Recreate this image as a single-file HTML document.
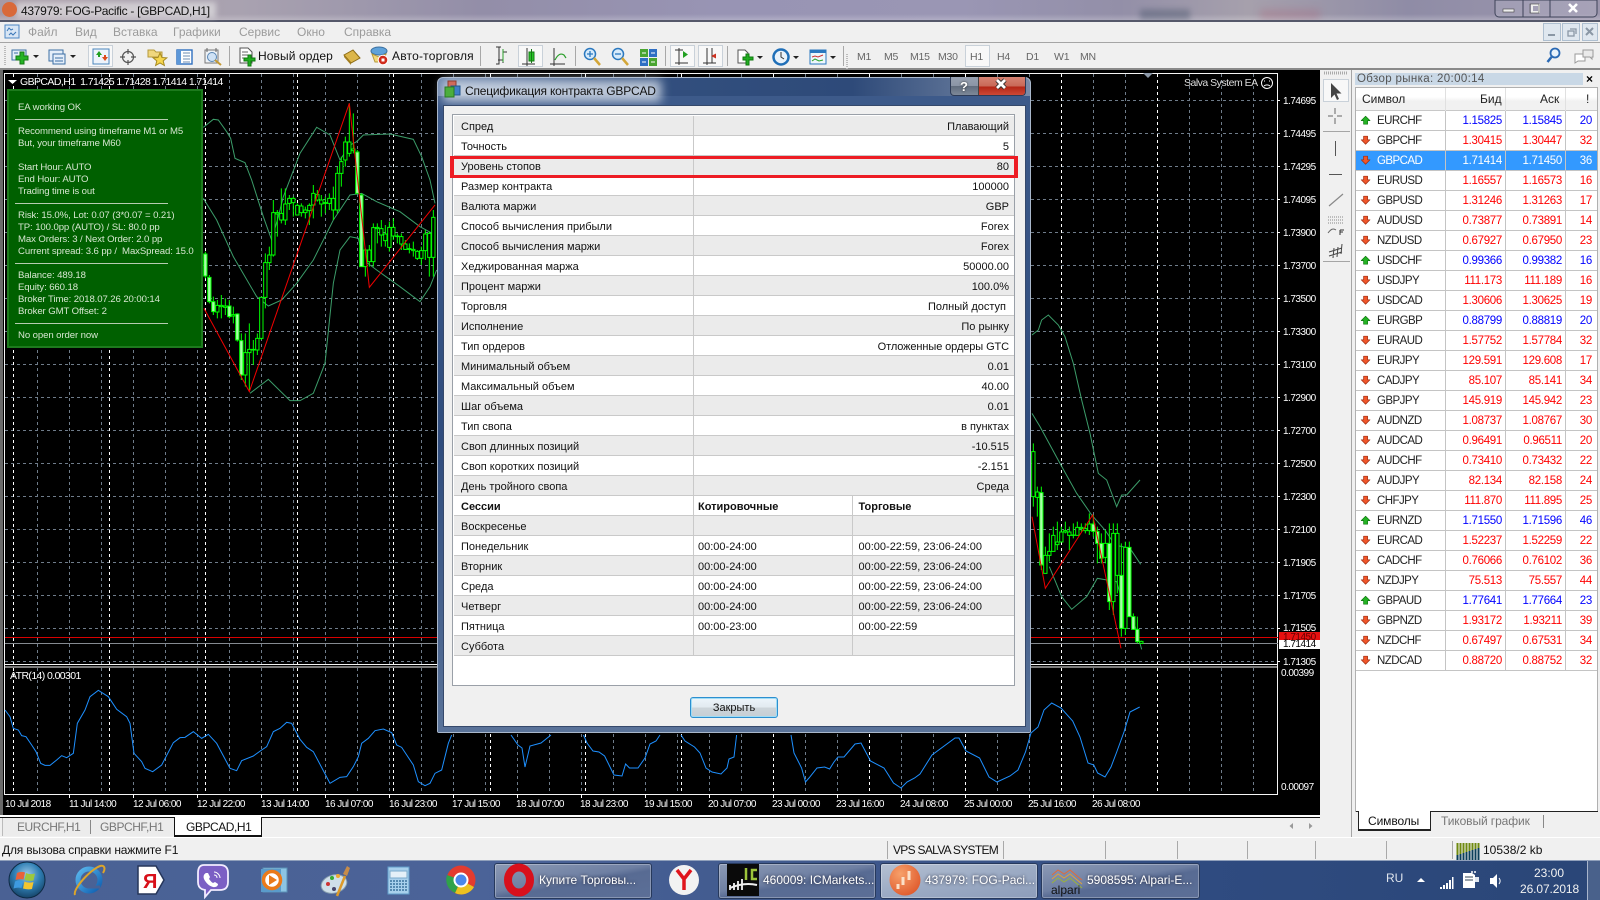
<!DOCTYPE html>
<html lang="ru"><head><meta charset="utf-8"><title>437979: FOG-Pacific - [GBPCAD,H1]</title>
<style>
*{box-sizing:border-box}
html,body{margin:0;padding:0;width:1600px;height:900px;overflow:hidden;background:#f0f0f0;font-family:"Liberation Sans",sans-serif;font-size:11px;color:#111}
.a{position:absolute;white-space:pre;line-height:14px}
.box{position:absolute}
svg{position:absolute;left:0;top:0}
.menu{color:#9b9b9b;font-size:12px;top:25px}
.tf{color:#666;font-size:10.5px;top:50px;letter-spacing:-.2px}
.px{color:#fff;font-size:10px;left:1283px;letter-spacing:-.5px;line-height:12px;margin-top:1px}
.tm{color:#fff;font-size:10px;top:799px;letter-spacing:-.55px;line-height:12px}
.gp{color:#d6e6d0;font-size:9.6px;left:18px;letter-spacing:-.1px;line-height:12px;margin-top:1px}
.hr{position:absolute;left:15px;width:153px;height:1px;background:#b5ccb0}
.row{position:absolute;left:454px;width:560px;height:20px;border-bottom:1px solid #c9c9c9;line-height:18px}
.row.g{background:#ebebeb}.row.w{background:#fff}
.row i{position:absolute;top:0;height:19px;width:1px;background:#c9c9c9}
.row b,.row span{position:absolute;top:2px;font-weight:400;white-space:pre}
.row .l{left:7px}.row .v{right:5px}.row .c2{left:244px}.row .c3{left:404.5px}
.mw{position:absolute;left:1356px;width:241px;height:20px;border-bottom:1px solid #c4c4c4;line-height:21px;font-size:11.5px;letter-spacing:-.3px;color:#f00;background:#fff}
.mw.u{color:#00f}.mw.s{background:#3399ff;color:#fff}
.mw u{position:absolute;text-decoration:none;top:0;white-space:pre}
.mw .n{left:21px;color:#222;letter-spacing:-.55px}.mw.s .n{color:#fff}
.mw .b{right:95px}.mw .k{right:35px}.mw .x{right:5px}
.mw i{position:absolute;top:0;width:1px;height:20px;background:#c4c4c4}
.mw svg{left:4px;top:4px}
.tb{position:absolute;top:863px;height:36px;border:1px solid #27395c;border-radius:3px;background:linear-gradient(170deg,#8c9ab5 0%,#6f80a3 45%,#586b93 55%,#5c6f97 100%);box-shadow:inset 0 0 0 1px rgba(255,255,255,.28)}
.tbt{position:absolute;color:#fff;font-size:12px;top:873px;white-space:pre;text-shadow:0 0 3px #223}
.sep{position:absolute;width:1px;background:#a9a9a9}
.tool{position:absolute;top:45px;height:22px;border:1px solid #c9d1d9;background:#f8f8f8}
</style></head><body>

<!-- wallpaper title -->
<div class="box" style="left:0;top:0;width:1600px;height:21px;background:linear-gradient(90deg,#a79aa6 0,#a9a2b0 15%,#938ea8 30%,#9894b4 45%,#9a96b4 60%,#938fa8 70%,#a6a0ac 78%,#8f8ca6 88%,#9c96ad 100%)"></div>
<div class="box" style="left:0;top:14px;width:1600px;height:6px;background:linear-gradient(180deg,rgba(255,255,255,0),rgba(255,255,255,.22))"></div>
<div class="box" style="left:1140px;top:9px;width:50px;height:11px;background:#3a4a60;opacity:.35;filter:blur(3px)"></div>
<div class="box" style="left:1260px;top:9px;width:60px;height:11px;background:#b05a70;opacity:.25;filter:blur(4px)"></div>
<div class="box" style="left:0;top:20px;width:1600px;height:2px;background:#55586a"></div>
<div class="box" style="left:16px;top:2px;width:200px;height:16px;background:rgba(235,235,235,.6);filter:blur(3px)"></div>
<div class="box" style="left:2px;top:2px;width:15px;height:15px;border-radius:8px;background:#d9693a"></div>
<div class="a" style="left:21px;top:4px;font-size:12px;color:#111;letter-spacing:-.3px">437979: FOG-Pacific - [GBPCAD,H1]</div>

<!-- menu -->
<div class="box" style="left:0;top:22px;width:1600px;height:20px;background:#f0f0f0"></div>
<div class="box" style="left:0;top:42px;width:1600px;height:1px;background:#a5a5a5"></div>
<div class="box" style="left:0;top:68px;width:1600px;height:2px;background:#8a8a8a"></div>
<div class="a menu" style="left:28px">Файл</div><div class="a menu" style="left:75px">Вид</div><div class="a menu" style="left:113px">Вставка</div><div class="a menu" style="left:173px">Графики</div><div class="a menu" style="left:239px">Сервис</div><div class="a menu" style="left:297px">Окно</div><div class="a menu" style="left:344px">Справка</div>

<!-- active toolbar boxes -->
<div class="tool" style="left:88px;width:25px"></div>
<div class="tool" style="left:518px;width:25px"></div>
<div class="tool" style="left:670px;width:25px"></div>
<div class="tool" style="left:698px;width:25px"></div>
<div class="tool" style="left:965px;width:25px"></div>
<div class="a" style="left:258px;top:49px;font-size:12px;letter-spacing:.1px">Новый ордер</div>
<div class="a" style="left:392px;top:49px;font-size:12px;letter-spacing:.2px">Авто-торговля</div>
<div class="a tf" style="left:857px">M1</div><div class="a tf" style="left:884px">M5</div><div class="a tf" style="left:910px">M15</div><div class="a tf" style="left:938px">M30</div><div class="a tf" style="left:970px">H1</div><div class="a tf" style="left:997px">H4</div><div class="a tf" style="left:1026px">D1</div><div class="a tf" style="left:1054px">W1</div><div class="a tf" style="left:1080px">MN</div>

<!-- toolbar icons -->
<svg width="1600" height="70" style="z-index:2">
<g fill="none" stroke="#a8a8a8"><path d="M229.5 46v20M480.5 46v20M575.5 46v20M665.5 46v20M727.5 46v20M843.5 46v20"/></g>
<path d="M5 46v20M847 54v20" stroke="#bbb" stroke-dasharray="1 1" stroke-width="2" fill="none"/>
<!-- app menu icon -->
<rect x="5" y="25" width="14" height="13" fill="#d8e6f5" stroke="#4d86c4"/><path d="M7 31l2-3 2 2 2-1M9 35l2-2 2 2 3-3" stroke="#3a77b8" fill="none"/>
<!-- new chart -->
<rect x="12" y="50" width="14" height="10" fill="#e4eef9" stroke="#3d6fa5"/><path d="M14 53h4M20 56h4" stroke="#3d6fa5"/><path d="M20 52h4v4h4v4h-4v4h-4v-4h-4v-4h4z" fill="#25b325" stroke="#137a13"/><path d="M33 55h6l-3 3z" fill="#222"/>
<rect x="49" y="50" width="14" height="11" fill="#e4eef9" stroke="#3d6fa5"/><rect x="53" y="54" width="12" height="10" fill="#e4eef9" stroke="#3d6fa5"/><path d="M55 58h8M55 61h8" stroke="#3d6fa5"/><path d="M70 55h6l-3 3z" fill="#222"/>
<!-- market watch -->
<rect x="93" y="49" width="16" height="15" fill="#eef4fb" stroke="#4b86bd"/><path d="M96 55l3-4 3 4h-2v2h-2v-2z" fill="#21a021"/><path d="M102 57l3 4 3-4h-2v-2h-2v2z" fill="#dd4b1c"/>
<!-- crosshair -->
<circle cx="128" cy="57" r="5.5" fill="none" stroke="#555" stroke-width="1.2"/><path d="M128 49v5M128 60v5M120 57h5M131 57h5" stroke="#555" stroke-width="1.2"/>
<!-- folder star -->
<path d="M148 50h6l2 2h6v5h-14z" fill="#f0d77e" stroke="#b69a3b"/><path d="M160 53l2 4.500 4.800.400-3.600 3 1.200 4.600-4.400-2.500-4.400 2.500 1.200-4.600-3.600-3 4.800-.400z" fill="#f6d64e" stroke="#a68a20"/>
<!-- navigator -->
<rect x="177" y="50" width="15" height="14" fill="#fff" stroke="#2f6fbf" stroke-width="1.400"/><rect x="177" y="50" width="4" height="14" fill="#5c97d8"/><path d="M183 53h7M183 56h7M183 59h7M183 62h7" stroke="#6c8cb0"/>
<!-- tester -->
<rect x="205" y="50" width="13" height="13" fill="#eef2f6" stroke="#777"/><path d="M207 48v4M216 48v4" stroke="#666"/><circle cx="212" cy="57" r="4.500" fill="#cfe2f5" stroke="#5886b5"/><path d="M215 60l6 5" stroke="#c49a35" stroke-width="2"/>
<!-- new order -->
<path d="M240 48h8l4 4v11h-12z" fill="#fff" stroke="#555"/><path d="M242 52h6M242 55h8M242 58h5" stroke="#666"/><path d="M248 55h3v3h4v3h-4v5h-3v-5h-4v-3h4z" fill="#21ad21" stroke="#0f7a0f"/>
<!-- book -->
<path d="M344 55l9-5 7 8-9 5z" fill="#dcb64a" stroke="#8c6b15"/><path d="M344 55l7 8v2l-7-8z" fill="#a47f20"/>
<!-- auto trading -->
<ellipse cx="379" cy="51" rx="8" ry="4" fill="#5fa2da" stroke="#3a6f9f"/><path d="M372 54l7 3 7-3-3 8h-8z" fill="#f2d87a" stroke="#b69a3b"/><circle cx="383" cy="60" r="4.800" fill="#d02a1a" stroke="#fff"/><rect x="381.500" y="58.500" width="3" height="3" fill="#fff"/>
<!-- bar chart -->
<path d="M498 60h5M503 50v13M503 52h4M499 47v17h-3M496 47h5" stroke="#333" fill="none"/><path d="M503 49v13" stroke="#2a9f2a"/>
<path d="M527 48v18M522 64h13" stroke="#333" fill="none"/><rect x="529" y="52" width="5" height="9" fill="#28c428" stroke="#167a16"/><path d="M531.500 49v14" stroke="#167a16"/>
<path d="M554 48v18M550 64h15" stroke="#333" fill="none"/><path d="M555 60c3-6 6-7 9-5l2 3" stroke="#2a9f2a" fill="none" stroke-width="1.200"/>
<!-- zoom + -->
<circle cx="590" cy="54" r="5.500" fill="#d7ebfb" stroke="#2a78bf" stroke-width="1.500"/><path d="M587 54h6M590 51v6" stroke="#2a78bf" stroke-width="1.300"/><path d="M594 58l6 7" stroke="#d3a638" stroke-width="2.500"/>
<circle cx="618" cy="54" r="5.500" fill="#d7ebfb" stroke="#2a78bf" stroke-width="1.500"/><path d="M615 54h6" stroke="#2a78bf" stroke-width="1.300"/><path d="M622 58l6 7" stroke="#d3a638" stroke-width="2.500"/>
<!-- tile -->
<rect x="640" y="49" width="8" height="8" fill="#4aa531"/><rect x="649" y="49" width="8" height="8" fill="#2f6fc4"/><rect x="640" y="58" width="8" height="8" fill="#2f6fc4"/><rect x="649" y="58" width="8" height="8" fill="#4aa531"/><path d="M642 53h4M651 53h4M642 62h4M651 62h4" stroke="#fff"/>
<!-- autoscroll -->
<path d="M679 48v17M675 63h13M675 50h8" stroke="#333" fill="none"/><path d="M683 58v-7l5 3.500z" fill="#22a022"/>
<path d="M707 48v17M703 63h13" stroke="#333" fill="none"/><path d="M712 48v15" stroke="#333"/><path d="M711 56l5-2.500v5z" fill="#cc3322"/>
<!-- add indicator -->
<path d="M738 50h7l3 3v10h-10z" fill="#fff" stroke="#555"/><path d="M743 57h3v-3h3v3h4v3h-4v5h-3v-5h-3z" fill="#21ad21" stroke="#0f7a0f"/>
<path d="M757 56h6l-3 3z" fill="#222"/>
<!-- clock -->
<circle cx="781" cy="57" r="7.500" fill="#e9f2fa" stroke="#1f6fb8" stroke-width="2.500"/><path d="M781 52v5l3 2" stroke="#333" fill="none"/><path d="M793 56h6l-3 3z" fill="#222"/>
<!-- template -->
<rect x="810" y="50" width="16" height="14" fill="#eef6fb" stroke="#2a78bf"/><rect x="810" y="50" width="16" height="3" fill="#2a78bf"/><path d="M812 57l3-1 3 1 5-2" stroke="#c33" fill="none"/><path d="M812 61l3-2 4 2 4-1" stroke="#29a329" fill="none"/><path d="M830 56h6l-3 3z" fill="#222"/>
<!-- search + chat -->
<circle cx="1555" cy="53" r="4.500" fill="#e8f2fb" stroke="#2a69b4" stroke-width="1.800"/><path d="M1551.500 57l-4 5" stroke="#2a69b4" stroke-width="2.500"/>
<path d="M1575 54h10v7h-7l-3 2v-2z" fill="#fff" stroke="#9a9a9a"/><path d="M1583 50h10v7h-1v2l-2-2h-7z" fill="#eaeaea" stroke="#9a9a9a"/>
<!-- window ctrl -->
<path d="M1495 0v13a4 4 0 0 0 4 4h94a4 4 0 0 0 4-4V0z" fill="rgba(200,200,215,.25)" stroke="#3d4258"/><path d="M1523 0v17M1550 0v17" stroke="#3d4258"/>
<rect x="1503" y="9" width="11" height="3" fill="#eee" stroke="#444" stroke-width=".6"/><rect x="1532" y="5" width="7" height="7" fill="none" stroke="#eee" stroke-width="2"/><rect x="1530" y="4" width="9" height="9" fill="none" stroke="#444" stroke-width=".6"/>
<path d="M1569 4l8 8M1577 4l-8 8" stroke="#fff" stroke-width="2.600"/>
<!-- mdi -->
<rect x="1543.500" y="23.500" width="17" height="17" fill="#dfe7ef" stroke="#aebfd0"/><rect x="1562.500" y="23.500" width="17" height="17" fill="#dfe7ef" stroke="#aebfd0"/><rect x="1582.500" y="23.500" width="15" height="17" fill="#dfe7ef" stroke="#aebfd0"/>
<path d="M1548 35h7" stroke="#8a97a5" stroke-width="2"/><rect x="1568" y="31" width="6" height="5" fill="none" stroke="#8a97a5" stroke-width="1.300"/><path d="M1570 29h6v5" fill="none" stroke="#8a97a5" stroke-width="1.300"/><path d="M1586 28l7 7M1593 28l-7 7" stroke="#8a97a5" stroke-width="2"/>
</svg>

<!-- CHART -->
<svg width="1600" height="900" style="z-index:1">
<rect x="0" y="70" width="3" height="747" fill="#6a6a6a"/>
<rect x="3" y="70" width="1317" height="745" fill="#000"/>
<g fill="none">
<path stroke="#6f7c8a" stroke-dasharray="3 3" d="M37.500 74V794M69.500 74V794M101.500 74V794M133.500 74V794M165.500 74V794M197.500 74V794M229.500 74V794M261.500 74V794M293.500 74V794M325.500 74V794M357.500 74V794M389.500 74V794M421.500 74V794M453.500 74V794M485.500 74V794M517.500 74V794M549.500 74V794M581.500 74V794M613.500 74V794M645.500 74V794M677.500 74V794M709.500 74V794M741.500 74V794M773.500 74V794M805.500 74V794M837.500 74V794M869.500 74V794M901.500 74V794M933.500 74V794M965.500 74V794M997.500 74V794M1029.500 74V794M1061.500 74V794M1093.500 74V794M1125.500 74V794M1157.500 74V794M1189.500 74V794M1221.500 74V794M1253.500 74V794"/>
<path stroke="#6f7c8a" stroke-dasharray="3 3" d="M5 100.500H1277M5 133.500H1277M5 166.500H1277M5 199.500H1277M5 232.500H1277M5 265.500H1277M5 298.500H1277M5 331.500H1277M5 364.500H1277M5 397.500H1277M5 430.500H1277M5 463.500H1277M5 496.500H1277M5 529.500H1277M5 562.500H1277M5 595.500H1277M5 628.500H1277M5 661.500H1277"/>
<path stroke="#fff" stroke-dasharray="3 3" d="M13.500 74V794M109.500 74V794M205.500 74V794M297.500 74V794M393.500 74V794M490.500 74V794M585.500 74V794M681.500 74V794M773.500 74V794M869.500 74V794M965.500 74V794M1061.500 74V794M1157.500 74V794"/>
</g>
<!-- frame -->
<path d="M4.500 73.500H1277.500V794.500H4.500Z M4.500 664.500H1277.500 M4.500 667H1277.500" fill="none" stroke="#f4f4f4"/>
<path d="M69.500 794v4M133.500 794v4M197.500 794v4M261.500 794v4M325.500 794v4M389.500 794v4M453.500 794v4M517.500 794v4M581.500 794v4M645.500 794v4M709.500 794v4M773.500 794v4M837.500 794v4M901.500 794v4M965.500 794v4M1029.500 794v4M1093.500 794v4" stroke="#fff" fill="none"/>
<path d="M1277 100.500h3M1277 133.500h3M1277 166.500h3M1277 199.500h3M1277 232.500h3M1277 265.500h3M1277 298.500h3M1277 331.500h3M1277 364.500h3M1277 397.500h3M1277 430.500h3M1277 463.500h3M1277 496.500h3M1277 529.500h3M1277 562.500h3M1277 595.500h3M1277 628.500h3M1277 661.500h3" stroke="#fff"/>
<path d="M1143 73h10l-5 5z" fill="#8c98a8"/>
<!-- ask/bid lines -->
<path d="M5 637.500H1278" stroke="#d80000"/>
<path d="M5 643.500H1278" stroke="#858a90"/>
<rect x="1279" y="632" width="41" height="8" fill="#e81010"/>
<rect x="1279" y="640" width="41" height="9" fill="#fff"/>

<!-- left cluster -->
<g transform="translate(0,70) scale(.33333)" fill="none">
<g stroke="#3c9d6a" stroke-width="3">
<path d="M610 172L640 148 655 150 680 185 692 205 705 265 735 278 755 330 790 440 815 510 835 440 850 380 900 250 950 172 990 195 1020 270 1050 225 1070 215 1090 195 1170 192 1240 208 1265 260 1290 330 1305 400"/>
<path d="M610 385L650 450 700 560 770 680 805 708 845 690 890 640 940 570 1000 450 1050 375 1085 370 1130 395 1200 425 1260 470 1300 492"/>
<path d="M750 970L805 928 870 992 900 992 940 970 975 880 1000 640 1020 540 1050 500 1075 505 1090 570 1130 600 1200 650 1260 695 1290 650 1310 600"/>
</g>
<path stroke="#00ff00" stroke-width="3" d="M616 545V625M628 615V700M640 680V735M652 690V745M664 675V745M676 685V735M688 690V745M700 710V760M712 730V815M724 790V930M736 790V950M748 760V960M760 810V885M772 790V855M784 680V810M796 550V715M808 530V600M820 390V560M832 420V500M844 355V460M856 355V465M868 375V420M880 380V440M892 400V435M904 400V440M916 410V445M928 400V465M940 345V445M952 360V395M964 375V440M976 380V430M988 370V420M1000 350V450M1012 290V430M1024 260V350M1036 200V290M1048 100V260M1060 130V250M1072 240V340M1084 370V590M1096 535V620M1108 525V590M1120 460V590M1132 460V520M1144 450V530M1156 465V530M1168 455V545M1180 445V510M1192 490V520M1204 490V540M1216 510V540M1228 520V550M1240 515V560M1252 540V570M1264 530V585M1276 480V570M1288 485V620M1300 420V620"/>
<path stroke="#00ff00" stroke-width="3" fill="#000" d="M647 706h10V726h-10zM659 706h10V710h-10zM671 708h10V712h-10zM695 734h10V738h-10zM731 848h10V915h-10zM743 838h10V848h-10zM755 838h10V840h-10zM767 805h10V840h-10zM779 682h10V805h-10zM791 578h10V682h-10zM803 555h10V578h-10zM815 428h10V555h-10zM827 428h10V432h-10zM839 430h10V450h-10zM851 402h10V450h-10zM863 385h10V400h-10zM875 385h10V398h-10zM887 406h10V435h-10zM899 408h10V428h-10zM911 420h10V428h-10zM923 406h10V422h-10zM935 370h10V405h-10zM947 374h10V390h-10zM959 390h10V402h-10zM971 398h10V400h-10zM983 385h10V400h-10zM995 385h10V420h-10zM1007 310h10V420h-10zM1019 275h10V310h-10zM1031 216h10V270h-10zM1043 216h10V250h-10zM1055 237h10V242h-10zM1091 540h10V590h-10zM1103 540h10V575h-10zM1115 473h10V575h-10zM1127 472h10V476h-10zM1139 476h10V495h-10zM1151 492h10V512h-10zM1163 472h10V532h-10zM1175 472h10V498h-10zM1187 498h10V500h-10zM1199 500h10V522h-10zM1211 522h10V538h-10zM1223 536h10V538h-10zM1235 538h10V542h-10zM1247 544h10V565h-10zM1259 542h10V565h-10zM1271 492h10V542h-10zM1283 490h10V562h-10zM1295 442h10V562h-10z"/>
<path stroke="#00ff00" stroke-width="3" fill="#a8ffa8" d="M611 552h10V618h-10zM623 622h10V695h-10zM635 695h10V725h-10zM683 708h10V740h-10zM707 732h10V810h-10zM719 812h10V915h-10zM1067 246h10V370h-10zM1079 375h10V590h-10z"/>
<path stroke="#f00000" stroke-width="3" d="M612 715L748 965 1048 100 1108 652 1305 405"/>
</g>
<!-- right cluster -->
<g transform="translate(1020,300) scale(.33333)" fill="none">
<g stroke="#3c9d6a" stroke-width="3">
<path d="M36 105L55 90 65 60 85 45 115 75 135 110 160 190 185 300 210 400 235 520 260 540 290 620 305 585 320 585 360 540"/>
<path d="M36 340L60 380 120 490 170 580 215 645 255 690 285 735 330 745 362 793"/>
<path d="M88 800L125 890 155 928 200 890 232 835 290 845 300 880 340 960 365 1048"/>
</g>
<path stroke="#00ff00" stroke-width="3" d="M40 430V620M52 560V650M64 560V810M76 740V820M88 700V785M100 680V755M112 665V750M124 680V725M136 665V700M148 680V750M160 670V715M172 665V705M184 670V695M196 670V700M208 640V705M220 645V710M232 680V790M244 700V790M256 690V790M268 670V930M280 670V945M292 670V880M304 730V1010M316 725V1005M328 725V950M340 940V990M352 950V1030M364 1022V1032"/>
<path stroke="#00ff00" stroke-width="3" fill="#000" d="M35 455h10V590h-10zM47 576h10V592h-10zM71 766h10V820h-10zM83 754h10V766h-10zM95 706h10V754h-10zM107 726h10V734h-10zM119 696h10V726h-10zM131 692h10V696h-10zM143 696h10V706h-10zM155 705h10V706h-10zM167 682h10V706h-10zM179 682h10V686h-10zM191 686h10V692h-10zM203 672h10V692h-10zM251 730h10V772h-10zM275 700h10V905h-10zM287 700h10V826h-10zM311 742h10V985h-10zM359 1024h10V1030h-10z"/>
<path stroke="#00ff00" stroke-width="3" fill="#a8ffa8" d="M59 578h10V795h-10zM215 672h10V694h-10zM227 694h10V730h-10zM239 730h10V775h-10zM263 730h10V905h-10zM299 826h10V985h-10zM323 742h10V950h-10zM335 950h10V988h-10zM347 988h10V1025h-10z"/>
<path stroke="#f00000" stroke-width="3" d="M36 650L76 865 218 645 303 1045"/>
</g>
<!-- ATR -->
<g fill="none" stroke="#1e90ff">
<path transform="translate(0,620) scale(.33333)" stroke-width="3" d="M15 270L30 290 40 325 55 330 65 347 78 350 95 375 108 395 122 430 135 436 150 436 170 420 185 407 200 413 220 400 232 310 255 270 270 230 295 211 325 230 350 268 380 290 390 310 402 400 425 425 435 445 458 455 485 435 520 368 540 353 555 352 580 335 605 355 625 343 650 370 690 445 710 452 725 422 760 408 785 390 800 380 820 335 840 325 860 307 875 310 900 358 920 382 940 395 990 490 1020 472 1040 470 1060 440 1075 410 1085 370 1105 355 1125 332 1150 327 1175 338 1190 375 1205 382 1240 435 1255 485 1275 497 1290 490 1305 460 1325 450 1345 370 1355 345"/>
<path d="M511 735L518 745 522 748 525 767 530 746 541 743 551 735"/>
<path d="M583.500 735L587 743 593 751 599 752 604.600 756 614 775 622 776 625.600 764 629.500 768 638 768 645 758 650 744 656 741 660 735"/>
<path d="M681 735L685 741 694.500 747 700 753 706 768 712 772 721 774 727 768 729 759 734 757 736.600 735"/>
<path d="M791 735L794 753 801.600 768 805.500 782 809 778 817 768 824.600 767 829.600 769 834 762 838 757 844 757 855 744 861 743 870.500 761 884 768 893.500 783 901 788 907 782 914.600 778 920 774 932 755 955 738 959 738 966 751 979.600 758 989 777 997 782 1010 776 1018 770 1025.500 752 1031 733 1038 727 1044 710 1051.700 703 1061 708 1072.700 721 1080 737 1088 763 1093.800 765 1097.600 773 1105 777 1111 767 1116.700 752 1124 732 1130 712 1139.700 707"/>
</g>
<circle cx="1267" cy="83" r="5.500" fill="none" stroke="#fff"/><path d="M1264 81h1M1269 81h1M1264 86c1.500-1.500 4.500-1.500 6 0" stroke="#fff" fill="none"/>
<path d="M8 80h9l-4.500 4z" fill="#fff"/>
</svg>

<!-- chart text (z above) -->
<div style="position:absolute;left:0;top:0;z-index:3">
<div class="a" style="left:20px;top:75px;color:#fff;font-size:10.5px;letter-spacing:-.58px">GBPCAD,H1  1.71425 1.71428 1.71414 1.71414</div>
<div class="a" style="left:1184px;top:76px;color:#ddd;font-size:10.5px;letter-spacing:-.5px">Salva System EA</div>
<div class="a" style="left:10px;top:669px;color:#fff;font-size:10.5px;letter-spacing:-.6px">ATR(14) 0.00301</div>
<div class="a px" style="top:95px">1.74695</div><div class="a px" style="top:128px">1.74495</div><div class="a px" style="top:161px">1.74295</div><div class="a px" style="top:194px">1.74095</div><div class="a px" style="top:227px">1.73900</div><div class="a px" style="top:260px">1.73700</div><div class="a px" style="top:293px">1.73500</div><div class="a px" style="top:326px">1.73300</div><div class="a px" style="top:359px">1.73100</div><div class="a px" style="top:392px">1.72900</div><div class="a px" style="top:425px">1.72700</div><div class="a px" style="top:458px">1.72500</div><div class="a px" style="top:491px">1.72300</div><div class="a px" style="top:524px">1.72100</div><div class="a px" style="top:557px">1.71905</div><div class="a px" style="top:590px">1.71705</div><div class="a px" style="top:622px">1.71505</div>
<div class="a px" style="top:631px;color:#600;height:9px;overflow:hidden;line-height:12px">1.71450</div>
<div class="a px" style="top:638px;color:#000">1.71414</div>
<div class="a px" style="top:656px">1.71305</div>
<div class="a px" style="top:667px;left:1281px">0.00399</div>
<div class="a px" style="top:781px;left:1281px">0.00097</div>
<div class="a tm" style="left:5px">10 Jul 2018</div><div class="a tm" style="left:69px">11 Jul 14:00</div><div class="a tm" style="left:133px">12 Jul 06:00</div><div class="a tm" style="left:197px">12 Jul 22:00</div><div class="a tm" style="left:261px">13 Jul 14:00</div><div class="a tm" style="left:325px">16 Jul 07:00</div><div class="a tm" style="left:389px">16 Jul 23:00</div><div class="a tm" style="left:452px">17 Jul 15:00</div><div class="a tm" style="left:516px">18 Jul 07:00</div><div class="a tm" style="left:580px">18 Jul 23:00</div><div class="a tm" style="left:644px">19 Jul 15:00</div><div class="a tm" style="left:708px">20 Jul 07:00</div><div class="a tm" style="left:772px">23 Jul 00:00</div><div class="a tm" style="left:836px">23 Jul 16:00</div><div class="a tm" style="left:900px">24 Jul 08:00</div><div class="a tm" style="left:964px">25 Jul 00:00</div><div class="a tm" style="left:1028px">25 Jul 16:00</div><div class="a tm" style="left:1092px">26 Jul 08:00</div>
</div>

<!-- green panel -->
<div class="box" style="left:7px;top:89px;width:196px;height:259px;background:#006000;border:2px solid #1d7a1d;z-index:4"></div>
<div style="position:absolute;left:0;top:0;z-index:5">
<div class="a gp" style="top:101px">EA working OK</div>
<div class="hr" style="top:119px"></div>
<div class="a gp" style="top:125px">Recommend using timeframe M1 or M5</div>
<div class="a gp" style="top:137px">But, your timeframe M60</div>
<div class="a gp" style="top:161px">Start Hour: AUTO</div>
<div class="a gp" style="top:173px">End Hour: AUTO</div>
<div class="a gp" style="top:185px">Trading time is out</div>
<div class="hr" style="top:203px"></div>
<div class="a gp" style="top:209px">Risk: 15.0%, Lot: 0.07 (3*0.07 = 0.21)</div>
<div class="a gp" style="top:221px">TP: 100.0pp (AUTO) / SL: 80.0 pp</div>
<div class="a gp" style="top:233px">Max Orders: 3 / Next Order: 2.0 pp</div>
<div class="a gp" style="top:245px">Current spread: 3.6 pp /  MaxSpread: 15.0</div>
<div class="hr" style="top:263px"></div>
<div class="a gp" style="top:269px">Balance: 489.18</div>
<div class="a gp" style="top:281px">Equity: 660.18</div>
<div class="a gp" style="top:293px">Broker Time: 2018.07.26 20:00:14</div>
<div class="a gp" style="top:305px">Broker GMT Offset: 2</div>
<div class="hr" style="top:323px"></div>
<div class="a gp" style="top:329px">No open order now</div>
</div>

<!-- dialog -->
<div style="position:absolute;left:0;top:0;z-index:6">
<div class="box" style="left:437px;top:77px;width:594px;height:656px;border-radius:6px 6px 2px 2px;border:1px solid #a9b7cb;background:linear-gradient(90deg,#6d86ad 0,#33507f 30%,#2e4a79 70%,#7a8ba8 100%)"></div>
<div class="box" style="left:438px;top:96px;width:592px;height:636px;background:linear-gradient(180deg,#3d5a8a 0,#2f4c7d 55%,#5a7399 100%);clip-path:polygon(0 0,100% 0,100% 100%,0 100%)"></div>
<div class="box" style="left:443px;top:80px;width:218px;height:22px;background:rgba(212,220,232,.85);filter:blur(5px)"></div>
<svg width="30" height="30" style="left:442px;top:76px"><rect x="6" y="5" width="8" height="8" fill="#d06a5a" stroke="#8c3c30"/><rect x="9" y="10" width="9" height="9" fill="#3f7fc7" stroke="#23558c"/><rect x="3" y="11" width="9" height="10" fill="#4cae3c" stroke="#2a7a22"/></svg>
<div class="a" style="left:465px;top:84px;font-size:12px;color:#111;letter-spacing:-.2px">Спецификация контракта GBPCAD</div>
<div class="box" style="left:950px;top:77px;width:76px;height:19px;border:1px solid #2d3b57;border-top:0;border-radius:0 0 4px 4px;overflow:hidden;background:linear-gradient(180deg,#97a1b1 0,#8b95a6 49%,#606c7d 50%,#7e8999 100%)">
<div style="position:absolute;left:27px;top:0;width:49px;height:19px;background:linear-gradient(180deg,#d68272 0,#c86856 49%,#b22414 50%,#cf4c3a 100%);border-left:1px solid #444"></div>
</div>
<svg width="90" height="24" style="left:945px;top:75px"><path d="M52 5l8 8M60 5l-8 8" stroke="#2a2a2a" stroke-width="4.500"/><path d="M52 5l8 8M60 5l-8 8" stroke="#fff" stroke-width="2.800"/></svg>
<div class="a" style="left:960px;top:80px;font-size:13px;font-weight:700;color:#fff;text-shadow:0 0 2px #222">?</div>
<div class="box" style="left:443px;top:105px;width:583px;height:622px;background:#f0f0f0;border:1px solid #36496b"></div>
<div class="box" style="left:452px;top:114px;width:563px;height:572px;background:#fff;border:1px solid #9aa0a8"></div>

<div class="row g" style="top:116px"><i style="left:239px"></i><b class="l">Спред</b><span class="v">Плавающий</span></div>
<div class="row w" style="top:136px"><i style="left:239px"></i><b class="l">Точность</b><span class="v">5</span></div>
<div class="row g" style="top:156px"><i style="left:239px"></i><b class="l">Уровень стопов</b><span class="v">80</span></div>
<div class="row w" style="top:176px"><i style="left:239px"></i><b class="l">Размер контракта</b><span class="v">100000</span></div>
<div class="row g" style="top:196px"><i style="left:239px"></i><b class="l">Валюта маржи</b><span class="v">GBP</span></div>
<div class="row w" style="top:216px"><i style="left:239px"></i><b class="l">Способ вычисления прибыли</b><span class="v">Forex</span></div>
<div class="row g" style="top:236px"><i style="left:239px"></i><b class="l">Способ вычисления маржи</b><span class="v">Forex</span></div>
<div class="row w" style="top:256px"><i style="left:239px"></i><b class="l">Хеджированная маржа</b><span class="v">50000.00</span></div>
<div class="row g" style="top:276px"><i style="left:239px"></i><b class="l">Процент маржи</b><span class="v">100.0%</span></div>
<div class="row w" style="top:296px"><i style="left:239px"></i><b class="l">Торговля</b><span class="v" style="right:8px">Полный доступ</span></div>
<div class="row g" style="top:316px"><i style="left:239px"></i><b class="l">Исполнение</b><span class="v">По рынку</span></div>
<div class="row w" style="top:336px"><i style="left:239px"></i><b class="l">Тип ордеров</b><span class="v" style="letter-spacing:-.1px">Отложенные ордеры GTC</span></div>
<div class="row g" style="top:356px"><i style="left:239px"></i><b class="l">Минимальный объем</b><span class="v">0.01</span></div>
<div class="row w" style="top:376px"><i style="left:239px"></i><b class="l">Максимальный объем</b><span class="v">40.00</span></div>
<div class="row g" style="top:396px"><i style="left:239px"></i><b class="l">Шаг объема</b><span class="v">0.01</span></div>
<div class="row w" style="top:416px"><i style="left:239px"></i><b class="l">Тип свопа</b><span class="v">в пунктах</span></div>
<div class="row g" style="top:436px"><i style="left:239px"></i><b class="l">Своп длинных позиций</b><span class="v">-10.515</span></div>
<div class="row w" style="top:456px"><i style="left:239px"></i><b class="l">Своп коротких позиций</b><span class="v">-2.151</span></div>
<div class="row g" style="top:476px"><i style="left:239px"></i><b class="l">День тройного свопа</b><span class="v">Среда</span></div>
<div class="row w" style="top:496px"><i style="left:239px"></i><i style="left:398px"></i><b class="l" style="font-weight:700">Сессии</b><b class="c2" style="font-weight:700">Котировочные</b><b class="c3" style="font-weight:700">Торговые</b></div>
<div class="row g" style="top:516px"><i style="left:239px"></i><i style="left:398px"></i><b class="l">Воскресенье</b></div>
<div class="row w" style="top:536px"><i style="left:239px"></i><i style="left:398px"></i><b class="l">Понедельник</b><span class="c2">00:00-24:00</span><span class="c3">00:00-22:59, 23:06-24:00</span></div>
<div class="row g" style="top:556px"><i style="left:239px"></i><i style="left:398px"></i><b class="l">Вторник</b><span class="c2">00:00-24:00</span><span class="c3">00:00-22:59, 23:06-24:00</span></div>
<div class="row w" style="top:576px"><i style="left:239px"></i><i style="left:398px"></i><b class="l">Среда</b><span class="c2">00:00-24:00</span><span class="c3">00:00-22:59, 23:06-24:00</span></div>
<div class="row g" style="top:596px"><i style="left:239px"></i><i style="left:398px"></i><b class="l">Четверг</b><span class="c2">00:00-24:00</span><span class="c3">00:00-22:59, 23:06-24:00</span></div>
<div class="row w" style="top:616px"><i style="left:239px"></i><i style="left:398px"></i><b class="l">Пятница</b><span class="c2">00:00-23:00</span><span class="c3">00:00-22:59</span></div>
<div class="row g" style="top:636px"><i style="left:239px"></i><i style="left:398px"></i><b class="l">Суббота</b></div>

<div class="box" style="left:450px;top:156px;width:568px;height:22px;border:4px solid #ed1c24;border-width:3px 4px"></div>
<div class="box" style="left:690px;top:697px;width:88px;height:21px;border:1px solid #2c8fd0;border-radius:3px;background:linear-gradient(180deg,#edf5fb 0,#e2eaf0 48%,#cdd5da 52%,#c6ced4 100%);box-shadow:inset 0 0 0 1px #9fdcf5;text-align:center;line-height:21px;font-size:11px;color:#111">Закрыть</div>
</div>

<!-- right side panels -->
<div class="box" style="left:1320px;top:70px;width:280px;height:770px;background:#f0f0f0;z-index:2"></div>
<div style="position:absolute;left:0;top:0;z-index:3">
<div class="box" style="left:1351px;top:70px;width:1px;height:767px;background:#a5a5a5"></div>
<div class="box" style="left:1355px;top:73px;width:228px;height:12px;background:#c9d8e6"></div>
<div class="a" style="left:1357px;top:72px;font-size:11.500px;color:#555;letter-spacing:.35px">Обзор рынка: 20:00:14</div>
<div class="a" style="left:1586px;top:72px;font-size:12px;font-weight:700;color:#000">×</div>
<div class="box" style="left:1355px;top:87px;width:243px;height:725px;background:#fff;border:1px solid #b0b0b0;border-bottom:0"></div>
<div class="box" style="left:1356px;top:88px;width:241px;height:23px;background:linear-gradient(180deg,#fff 0,#fff 40%,#f1f1f1 60%,#f1f1f1 100%);border-bottom:1px solid #c8c8c8"></div>
<div class="a" style="left:1362px;top:92px;font-size:12px;color:#222">Символ</div>
<div class="a" style="left:1480px;top:92px;font-size:12px;color:#222">Бид</div>
<div class="a" style="left:1540px;top:92px;font-size:12px;color:#222">Аск</div>
<div class="a" style="left:1586px;top:92px;font-size:12px;color:#222">!</div>
<div class="box" style="left:1445px;top:88px;width:1px;height:23px;background:#e0e0e0"></div><div class="box" style="left:1505px;top:88px;width:1px;height:23px;background:#e0e0e0"></div><div class="box" style="left:1565px;top:88px;width:1px;height:23px;background:#e0e0e0"></div>

<svg width="0" height="0"><defs>
<g id="up"><path transform="scale(.8)" d="M7 1.500l5.500 5.500H9.500v4.500h-5V7H1.500z" fill="#25b325" stroke="#0f7a0f" stroke-width=".9" stroke-linejoin="round"/></g>
<g id="dn"><path transform="scale(.8)" d="M4.500 1.500h5v4.500h3l-5.500 5.500-5.500-5.500h3z" fill="#f0552a" stroke="#a02e10" stroke-width=".9" stroke-linejoin="round"/></g>
</defs></svg>

<div class="mw u" style="top:111px"><svg width="14" height="14"><use href="#up"/></svg><u class="n">EURCHF</u><i style="left:89px"></i><i style="left:149px"></i><i style="left:209px"></i><u class="b">1.15825</u><u class="k">1.15845</u><u class="x">20</u></div>
<div class="mw" style="top:131px"><svg width="14" height="14"><use href="#dn"/></svg><u class="n">GBPCHF</u><i style="left:89px"></i><i style="left:149px"></i><i style="left:209px"></i><u class="b">1.30415</u><u class="k">1.30447</u><u class="x">32</u></div>
<div class="mw s" style="top:151px"><svg width="14" height="14"><use href="#dn"/></svg><u class="n">GBPCAD</u><i style="left:89px"></i><i style="left:149px"></i><i style="left:209px"></i><u class="b">1.71414</u><u class="k">1.71450</u><u class="x">36</u></div>
<div class="mw" style="top:171px"><svg width="14" height="14"><use href="#dn"/></svg><u class="n">EURUSD</u><i style="left:89px"></i><i style="left:149px"></i><i style="left:209px"></i><u class="b">1.16557</u><u class="k">1.16573</u><u class="x">16</u></div>
<div class="mw" style="top:191px"><svg width="14" height="14"><use href="#dn"/></svg><u class="n">GBPUSD</u><i style="left:89px"></i><i style="left:149px"></i><i style="left:209px"></i><u class="b">1.31246</u><u class="k">1.31263</u><u class="x">17</u></div>
<div class="mw" style="top:211px"><svg width="14" height="14"><use href="#dn"/></svg><u class="n">AUDUSD</u><i style="left:89px"></i><i style="left:149px"></i><i style="left:209px"></i><u class="b">0.73877</u><u class="k">0.73891</u><u class="x">14</u></div>
<div class="mw" style="top:231px"><svg width="14" height="14"><use href="#dn"/></svg><u class="n">NZDUSD</u><i style="left:89px"></i><i style="left:149px"></i><i style="left:209px"></i><u class="b">0.67927</u><u class="k">0.67950</u><u class="x">23</u></div>
<div class="mw u" style="top:251px"><svg width="14" height="14"><use href="#up"/></svg><u class="n">USDCHF</u><i style="left:89px"></i><i style="left:149px"></i><i style="left:209px"></i><u class="b">0.99366</u><u class="k">0.99382</u><u class="x">16</u></div>
<div class="mw" style="top:271px"><svg width="14" height="14"><use href="#dn"/></svg><u class="n">USDJPY</u><i style="left:89px"></i><i style="left:149px"></i><i style="left:209px"></i><u class="b">111.173</u><u class="k">111.189</u><u class="x">16</u></div>
<div class="mw" style="top:291px"><svg width="14" height="14"><use href="#dn"/></svg><u class="n">USDCAD</u><i style="left:89px"></i><i style="left:149px"></i><i style="left:209px"></i><u class="b">1.30606</u><u class="k">1.30625</u><u class="x">19</u></div>
<div class="mw u" style="top:311px"><svg width="14" height="14"><use href="#up"/></svg><u class="n">EURGBP</u><i style="left:89px"></i><i style="left:149px"></i><i style="left:209px"></i><u class="b">0.88799</u><u class="k">0.88819</u><u class="x">20</u></div>
<div class="mw" style="top:331px"><svg width="14" height="14"><use href="#dn"/></svg><u class="n">EURAUD</u><i style="left:89px"></i><i style="left:149px"></i><i style="left:209px"></i><u class="b">1.57752</u><u class="k">1.57784</u><u class="x">32</u></div>
<div class="mw" style="top:351px"><svg width="14" height="14"><use href="#dn"/></svg><u class="n">EURJPY</u><i style="left:89px"></i><i style="left:149px"></i><i style="left:209px"></i><u class="b">129.591</u><u class="k">129.608</u><u class="x">17</u></div>
<div class="mw" style="top:371px"><svg width="14" height="14"><use href="#dn"/></svg><u class="n">CADJPY</u><i style="left:89px"></i><i style="left:149px"></i><i style="left:209px"></i><u class="b">85.107</u><u class="k">85.141</u><u class="x">34</u></div>
<div class="mw" style="top:391px"><svg width="14" height="14"><use href="#dn"/></svg><u class="n">GBPJPY</u><i style="left:89px"></i><i style="left:149px"></i><i style="left:209px"></i><u class="b">145.919</u><u class="k">145.942</u><u class="x">23</u></div>
<div class="mw" style="top:411px"><svg width="14" height="14"><use href="#dn"/></svg><u class="n">AUDNZD</u><i style="left:89px"></i><i style="left:149px"></i><i style="left:209px"></i><u class="b">1.08737</u><u class="k">1.08767</u><u class="x">30</u></div>
<div class="mw" style="top:431px"><svg width="14" height="14"><use href="#dn"/></svg><u class="n">AUDCAD</u><i style="left:89px"></i><i style="left:149px"></i><i style="left:209px"></i><u class="b">0.96491</u><u class="k">0.96511</u><u class="x">20</u></div>
<div class="mw" style="top:451px"><svg width="14" height="14"><use href="#dn"/></svg><u class="n">AUDCHF</u><i style="left:89px"></i><i style="left:149px"></i><i style="left:209px"></i><u class="b">0.73410</u><u class="k">0.73432</u><u class="x">22</u></div>
<div class="mw" style="top:471px"><svg width="14" height="14"><use href="#dn"/></svg><u class="n">AUDJPY</u><i style="left:89px"></i><i style="left:149px"></i><i style="left:209px"></i><u class="b">82.134</u><u class="k">82.158</u><u class="x">24</u></div>
<div class="mw" style="top:491px"><svg width="14" height="14"><use href="#dn"/></svg><u class="n">CHFJPY</u><i style="left:89px"></i><i style="left:149px"></i><i style="left:209px"></i><u class="b">111.870</u><u class="k">111.895</u><u class="x">25</u></div>
<div class="mw u" style="top:511px"><svg width="14" height="14"><use href="#up"/></svg><u class="n">EURNZD</u><i style="left:89px"></i><i style="left:149px"></i><i style="left:209px"></i><u class="b">1.71550</u><u class="k">1.71596</u><u class="x">46</u></div>
<div class="mw" style="top:531px"><svg width="14" height="14"><use href="#dn"/></svg><u class="n">EURCAD</u><i style="left:89px"></i><i style="left:149px"></i><i style="left:209px"></i><u class="b">1.52237</u><u class="k">1.52259</u><u class="x">22</u></div>
<div class="mw" style="top:551px"><svg width="14" height="14"><use href="#dn"/></svg><u class="n">CADCHF</u><i style="left:89px"></i><i style="left:149px"></i><i style="left:209px"></i><u class="b">0.76066</u><u class="k">0.76102</u><u class="x">36</u></div>
<div class="mw" style="top:571px"><svg width="14" height="14"><use href="#dn"/></svg><u class="n">NZDJPY</u><i style="left:89px"></i><i style="left:149px"></i><i style="left:209px"></i><u class="b">75.513</u><u class="k">75.557</u><u class="x">44</u></div>
<div class="mw u" style="top:591px"><svg width="14" height="14"><use href="#up"/></svg><u class="n">GBPAUD</u><i style="left:89px"></i><i style="left:149px"></i><i style="left:209px"></i><u class="b">1.77641</u><u class="k">1.77664</u><u class="x">23</u></div>
<div class="mw" style="top:611px"><svg width="14" height="14"><use href="#dn"/></svg><u class="n">GBPNZD</u><i style="left:89px"></i><i style="left:149px"></i><i style="left:209px"></i><u class="b">1.93172</u><u class="k">1.93211</u><u class="x">39</u></div>
<div class="mw" style="top:631px"><svg width="14" height="14"><use href="#dn"/></svg><u class="n">NZDCHF</u><i style="left:89px"></i><i style="left:149px"></i><i style="left:209px"></i><u class="b">0.67497</u><u class="k">0.67531</u><u class="x">34</u></div>
<div class="mw" style="top:651px"><svg width="14" height="14"><use href="#dn"/></svg><u class="n">NZDCAD</u><i style="left:89px"></i><i style="left:149px"></i><i style="left:209px"></i><u class="b">0.88720</u><u class="k">0.88752</u><u class="x">32</u></div>

<!-- mw tabs -->
<div class="box" style="left:1356px;top:811px;width:242px;height:25px;background:#f0f0f0;border-top:1px solid #222"></div>
<div class="box" style="left:1358px;top:811px;width:73px;height:20px;background:#fff;border:1px solid #222;border-top:0;border-bottom-width:2px"></div>
<div class="a" style="left:1368px;top:814px;font-size:12px;color:#111;letter-spacing:-.1px">Символы</div>
<div class="a" style="left:1441px;top:814px;font-size:12px;color:#777;letter-spacing:-.1px">Тиковый график</div>
<div class="box" style="left:1543px;top:815px;width:1px;height:13px;background:#888"></div>
<!-- vertical toolbar -->
<svg width="1600" height="300">
<path d="M1324 73h24" stroke="#aaa" stroke-width="3" stroke-dasharray="1 1"/>
<rect x="1323.500" y="79.500" width="25" height="22" fill="#f8f8f8" stroke="#c9d1d9"/>
<path d="M1331 83v15l3.500-3.500 2.500 5.500 2-1-2.500-5.500h5z" fill="#444"/>
<path d="M1335 108v6M1335 118v6M1328 116h5M1337 116h5" stroke="#666"/>
<path d="M1323 131.500h27M1323 261.500h27" stroke="#a5a5a5"/>
<path d="M1335.500 141v15" stroke="#555"/><path d="M1329 174.500h13" stroke="#555"/><path d="M1329 206l14-12" stroke="#888" stroke-width="1.200"/>
<path d="M1328 217h15M1328 220h15M1328 223h15" stroke="#888" stroke-dasharray="1 1"/><path d="M1328 233c3-4 5-5 8-3" stroke="#666" fill="none"/><path d="M1340 230h4M1340 230v5M1340 232h3" stroke="#333" fill="none"/>
<path d="M1329 256l13-4M1329 252l13-4M1333 258l1-10M1337 257l1-10M1341 254l1-10" stroke="#444" fill="none"/>
</svg>
</div>

<!-- tabs -->
<div class="box" style="left:0;top:815px;width:1320px;height:2px;background:#fff;z-index:2"></div>
<div class="box" style="left:0;top:817px;width:1320px;height:21px;background:#f0f0f0;border-top:1px solid #111;z-index:2"></div>
<div class="box" style="left:0;top:837px;width:1600px;height:1px;background:#fff;z-index:3"></div>
<div style="position:absolute;left:0;top:0;z-index:3">
<div class="box" style="left:2px;top:818px;width:172px;height:18px;background:#ececec;border-left:1px solid #bbb"></div>
<div class="a" style="left:17px;top:820px;font-size:12px;color:#777;letter-spacing:-.45px">EURCHF,H1</div>
<div class="box" style="left:90px;top:820px;width:1px;height:14px;background:#888"></div>
<div class="a" style="left:100px;top:820px;font-size:12px;color:#777;letter-spacing:-.45px">GBPCHF,H1</div>
<div class="box" style="left:174px;top:817px;width:88px;height:20px;background:#fff;border:1px solid #111;border-top:0;border-bottom-width:2px"></div>
<div class="a" style="left:186px;top:820px;font-size:12px;color:#111;letter-spacing:-.45px">GBPCAD,H1</div>
<svg width="1320" height="836"><path d="M1293 823l-3.500 3 3.500 3zM1309 823l3.500 3-3.500 3z" fill="#999"/></svg>
</div>

<!-- status -->
<div style="position:absolute;left:0;top:0;z-index:3">
<div class="a" style="left:2px;top:843px;font-size:12px;color:#111;letter-spacing:-.18px">Для вызова справки нажмите F1</div>
<div class="sep" style="left:887px;top:841px;height:18px"></div>
<div class="a" style="left:893px;top:843px;font-size:12px;color:#111;letter-spacing:-.7px">VPS SALVA SYSTEM</div>
<div class="sep" style="left:1003px;top:841px;height:18px"></div><div class="sep" style="left:1105px;top:841px;height:18px"></div><div class="sep" style="left:1177px;top:841px;height:18px"></div><div class="sep" style="left:1247px;top:841px;height:18px"></div><div class="sep" style="left:1315px;top:841px;height:18px"></div><div class="sep" style="left:1386px;top:841px;height:18px"></div><div class="sep" style="left:1452px;top:841px;height:18px"></div>
<svg width="1600" height="900"><path d="M1457.500 843v17M1460.500 843v17M1463.500 843v17M1466.500 843v17M1469.500 843v17M1472.500 843v17M1475.500 843v17M1478.500 843v17" stroke="#6f8a10" stroke-width="2"/><path d="M1457.500 860v-5M1460.500 860v-6M1463.500 860v-7M1466.500 860v-8M1469.500 860v-9M1472.500 860v-10M1475.500 860v-11M1478.500 860v-12" stroke="#0b3f5a" stroke-width="2"/></svg>
<div class="a" style="left:1483px;top:843px;font-size:12px;color:#111">10538/2 kb</div>
</div>

<!-- taskbar -->
<div class="box" style="left:0;top:860px;width:1600px;height:40px;background:linear-gradient(90deg,#4a6194 0,#4b6398 30%,#3a5488 60%,#2f4b80 75%,#2a4677 100%);border-top:1px solid #90a0bb;z-index:7"></div>
<div style="position:absolute;left:0;top:0;z-index:8">
<div class="tb" style="left:494px;width:158px"></div>
<div class="tb" style="left:718px;width:158px"></div>
<div class="tb" style="left:880px;width:158px;background:linear-gradient(170deg,#b4c0d2 0%,#9cabc4 50%,#8d9dba 100%)"></div>
<div class="tb" style="left:1041px;width:159px"></div>
<div class="box" style="left:1587px;top:861px;width:13px;height:39px;background:rgba(255,255,255,.15);border-left:1px solid #a8b5cc"></div>
<svg width="1600" height="900">
<!-- start orb -->
<defs><radialGradient id="o" cx=".5" cy=".35" r=".7"><stop offset="0" stop-color="#9ac8e8"/><stop offset=".5" stop-color="#2f7fb4"/><stop offset="1" stop-color="#123a5c"/></radialGradient>
<linearGradient id="ie" x1="0" y1="0" x2="1" y2="1"><stop offset="0" stop-color="#5ab8ee"/><stop offset="1" stop-color="#0f5fb0"/></linearGradient>
<radialGradient id="f" cx=".35" cy=".3" r=".9"><stop offset="0" stop-color="#f7a06a"/><stop offset="1" stop-color="#db4e22"/></radialGradient></defs>
<circle cx="27" cy="880" r="18" fill="url(#o)" stroke="#0e2a44"/>
<path d="M17 873q4-2 8-.500l-1.500 7q-4-1-8 .500z" fill="#e8613a"/><path d="M26 873q4 2 9 .500l-1.500 7q-4 1-9-.500z" fill="#9cc83c"/><path d="M15 881.500q4-2 8-.500l-1.500 7q-4-1-8 .500z" fill="#3e9be0"/><path d="M24.500 881.500q4 2 9 .500l-1.500 7q-4 1-9-.500z" fill="#f3c52f"/>
<!-- IE -->
<circle cx="89" cy="880" r="11" fill="none" stroke="url(#ie)" stroke-width="5"/><path d="M79 880h21" stroke="url(#ie)" stroke-width="4"/><path d="M90 887h10" stroke="#4a6194" stroke-width="3"/>
<path d="M75 895c-3-7 22-32 28-29 2 1 2 4 0 7" fill="none" stroke="#dca52a" stroke-width="2"/>
<!-- Yandex -->
<path d="M138 866h18l8 14-8 14h-18z" fill="#fff" stroke="#26365a" stroke-width="1.500"/>
<text x="143" y="888" font-family="Liberation Sans" font-size="20" font-weight="700" fill="#d8101a">Я</text>
<!-- viber -->
<path d="M204 865h16q8 0 8 8v9q0 8-8 8h-9l-6 7v-7q-7-1-7-8v-9q0-8 6-8z" fill="#7b5fc4" stroke="#f2ecff" stroke-width="1.800"/>
<path d="M206 873c-2 1-3 3-2 6 2 4 5 7 9 8 3 .5 5-1 5-3l-3-2-2 1c-2-1-3-3-4-4l1-2-2-4z" fill="#fff"/><path d="M214 872c3 0 6 3 6 6M214 875c2 0 3 1 3 3" fill="none" stroke="#fff"/>
<!-- WMP -->
<rect x="263" y="868" width="24" height="24" fill="#8cc4e4" stroke="#5a8fb5"/><rect x="261" y="869" width="20" height="23" fill="#5a9bcb"/>
<circle cx="272" cy="880" r="8.500" fill="#fff" stroke="#ea7a1a" stroke-width="3.500"/><path d="M269 875l8 5-8 5z" fill="#ea7a1a"/>
<!-- paint -->
<ellipse cx="334" cy="884" rx="13" ry="9" fill="#cfdfe9" stroke="#8aa0b0" transform="rotate(-15 334 884)"/><circle cx="328" cy="884" r="2" fill="#c33"/><circle cx="332" cy="878" r="2" fill="#3a3"/><circle cx="338" cy="876" r="2" fill="#ea3"/><circle cx="334" cy="889" r="2" fill="#46466a"/>
<path d="M337 896l8-20" stroke="#dd9a2a" stroke-width="2.500"/><path d="M343 874l4-8 3 2-3 8z" fill="#c78c4a"/>
<!-- calc -->
<rect x="388" y="867" width="21" height="27" fill="#a8d0ec" stroke="#5f9bc8"/><rect x="390" y="871" width="17" height="7" fill="#e4f0f8" stroke="#7aaacb"/><path d="M390 881h17M390 884h17M390 887h17M390 890h17" stroke="#4a7fa8" stroke-width="1.800" stroke-dasharray="2 1"/>
<!-- chrome -->
<circle cx="461" cy="880" r="14.500" fill="#e33b2e"/><path d="M461 880l13 7a14.500 14.500 0 0 1-19 6z" fill="#ecc11f"/><path d="M461 880l-6 13a14.500 14.500 0 0 1-8-18z" fill="#2fa24a"/><circle cx="461" cy="880" r="7.500" fill="#fff"/><circle cx="461" cy="880" r="5.500" fill="#4a87ea"/>
<!-- opera -->
<ellipse cx="519" cy="880" rx="11" ry="12.500" fill="none" stroke="#d8101c" stroke-width="8"/>
<!-- yandex browser -->
<circle cx="684" cy="880" r="15" fill="#f2f2f2"/><path d="M677 870l7 9 7-9M684 879v11" fill="none" stroke="#e0141c" stroke-width="3.500"/>
<!-- IC -->
<rect x="727" y="864" width="32" height="32" fill="#0a0a0a"/><path d="M730 885v5M734 883v7M738 881v9M742 879v11" stroke="#ddd" stroke-width="2"/><path d="M746 868v12" stroke="#9cc43a" stroke-width="2.500"/><path d="M757 870h-5v9h5" fill="none" stroke="#9cc43a" stroke-width="2.500"/><path d="M730 888q14-6 27-3" stroke="#eee" fill="none" stroke-width="2"/>
<!-- FOG -->
<circle cx="905" cy="880" r="15.500" fill="url(#f)"/><path d="M898 889v-5M903 885v-8M909 880v-9" stroke="#fbe0c8" stroke-width="3"/>
<!-- alpari -->
<path d="M1052 875l6-5 6 4 6-4 6 5 6 5" fill="none" stroke="#e06a3a"/><path d="M1052 879l6-5 6 4 6-4 6 5 6 5" fill="none" stroke="#e0a03a"/><path d="M1052 883l6-5 6 4 6-4 6 5 6 5" fill="none" stroke="#9ab33a"/>
<text x="1051" y="894" font-family="Liberation Sans" font-size="12" fill="#111">alpari</text>
<!-- tray -->
<path d="M1417 882h8l-4-4z" fill="#fff"/>
<path d="M1440 887h2v2h-2zM1443 885h2v4h-2zM1446 883h2v6h-2zM1449 880h2v9h-2zM1452 877h1.500v12h-1.500z" fill="#fff"/>
<path d="M1463 873h9l3 2v13h-12z" fill="#fff"/><path d="M1465 877h8M1465 880h8" stroke="#345"/><path d="M1472 873v-2M1475 873v-2" stroke="#fff" stroke-width="1.500"/><path d="M1475 877h4v5h-4" fill="#dfe5ee"/>
<path d="M1490 878h3l4-4v14l-4-4h-3z" fill="#fff"/><path d="M1499 878c1.500 2 1.500 4 0 6" stroke="#fff" fill="none"/>
</svg>
<div class="tbt" style="left:539px">Купите Торговы...</div>
<div class="tbt" style="left:763px">460009: ICMarkets...</div>
<div class="tbt" style="left:925px">437979: FOG-Paci...</div>
<div class="tbt" style="left:1087px">5908595: Alpari-E...</div>
<div class="a" style="left:1386px;top:871px;font-size:12px;color:#dfe5ee">RU</div>
<div class="a" style="left:1534px;top:866px;font-size:12px;color:#f2f2f2">23:00</div>
<div class="a" style="left:1520px;top:882px;font-size:12px;color:#f2f2f2;letter-spacing:-.1px">26.07.2018</div>
</div>
</body></html>
